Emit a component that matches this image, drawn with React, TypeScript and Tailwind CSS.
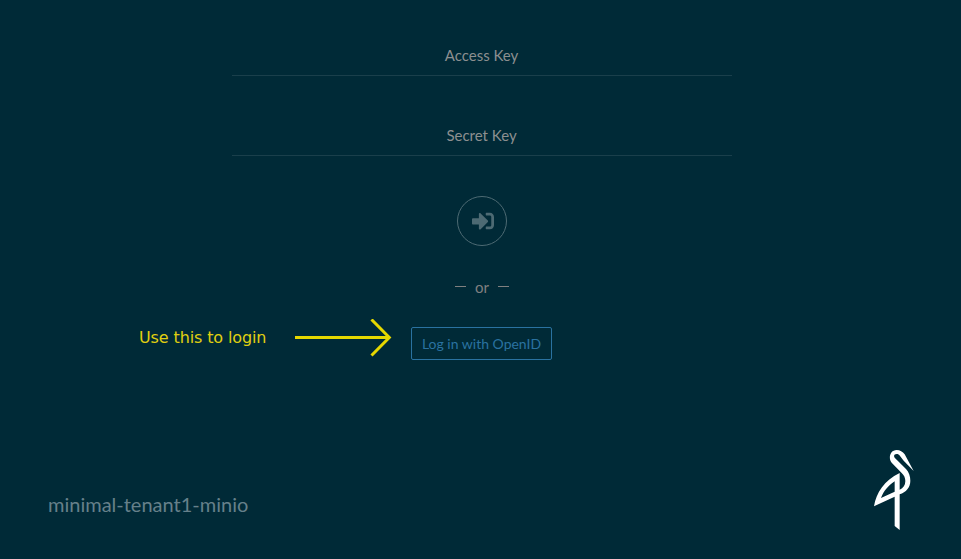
function Field({ label }: { label: string }) {
  return (
    <div className="flex h-[41px] w-[500px] items-center justify-center border-b border-[#1a3f4b] pr-px text-[15px] leading-[22px] text-[#8c8f90]">
      {label}
    </div>
  );
}

function SignInIcon() {
  return (
    <svg viewBox="0 0 512 512" className="h-[22px] w-[22px]" fill="currentColor">
      <path d="M416 448h-84c-6.6 0-12-5.4-12-12v-40c0-6.6 5.4-12 12-12h84c17.7 0 32-14.3 32-32V160c0-17.7-14.3-32-32-32h-84c-6.6 0-12-5.4-12-12V76c0-6.6 5.4-12 12-12h84c53 0 96 43 96 96v192c0 53-43 96-96 96zm-47-201L201 79c-15-15-41-4.5-41 17v96H24c-13.3 0-24 10.7-24 24v96c0 13.3 10.7 24 24 24h136v96c0 21.5 26 32 41 17l168-168c9.3-9.4 9.3-24.6 0-34z" />
    </svg>
  );
}

function Crane() {
  return (
    <svg viewBox="42 29 120 240" className="h-20 w-10" fill="none">
      <path
        fill="#fff"
        fillRule="evenodd"
        d="M119 98V148C130 143 136 135 136 122C136 112 132 105 125 98L95 67C84 54 90 29 110 29C120 29 128 34 134 42L161 92L131 61L120 47C117 43 114 41 110 41C103 41 100 47 104 52L138 86C147 96 151 108 151 121C151 142 138 155 119 162V269L104 257V169L42 198C49 158 72 120 119 98ZM104 123C84 136 71 153 63 173L104 154Z"
      />
    </svg>
  );
}

export default function App() {
  return (
    <main className="flex h-[559px] w-[961px] flex-col overflow-hidden bg-[#002a37] font-['Lato',sans-serif]">
      <form className="ml-[232px] flex w-[500px] flex-col items-center pt-[35px]">
        <Field label="Access Key" />
        <div className="h-[39px]" />
        <Field label="Secret Key" />
        <button type="button" className="mt-10 flex h-[50px] w-[50px] items-center justify-center rounded-full border border-[#4d6a73] pl-0.5 text-[#4d6a73]">
          <SignInIcon />
        </button>
        <div className="mt-[30px] flex h-[22px] items-center gap-[9px] text-[15px] text-[#808080]">
          <span className="mb-px h-px w-[11px] bg-[#808080]" />
          <span>or</span>
          <span className="mb-px h-px w-[11px] bg-[#808080]" />
        </div>
      </form>
      <div className="mt-[21px] flex h-[50px] pl-[139px]">
        <span className="w-[156px] pt-[7px] font-['DejaVu_Sans',sans-serif] text-[16px] leading-[24px] tracking-[-0.12px] text-[#e0d010]">Use this to login</span>
        <svg viewBox="0 0 98 40" className="h-10 w-[98px]" fill="none" stroke="#e6d800" strokeWidth="3">
          <path d="M0 18.5H94M76.5 .5L94.3 18.5L76.5 36.5" />
        </svg>
        <button type="button" className="ml-[18px] mt-[8px] h-[33px] w-[141px] rounded-[2px] border border-[#2a72a0] text-[14px] text-[#2a72a0]">Log in with OpenID</button>
      </div>
      <footer className="mt-[81px] flex items-start justify-between pl-12 pr-[47px]">
        <span className="mt-[40px] text-[20px] leading-[28px] text-[#66808a]">minimal-tenant1-minio</span>
        <Crane />
      </footer>
    </main>
  );
}
